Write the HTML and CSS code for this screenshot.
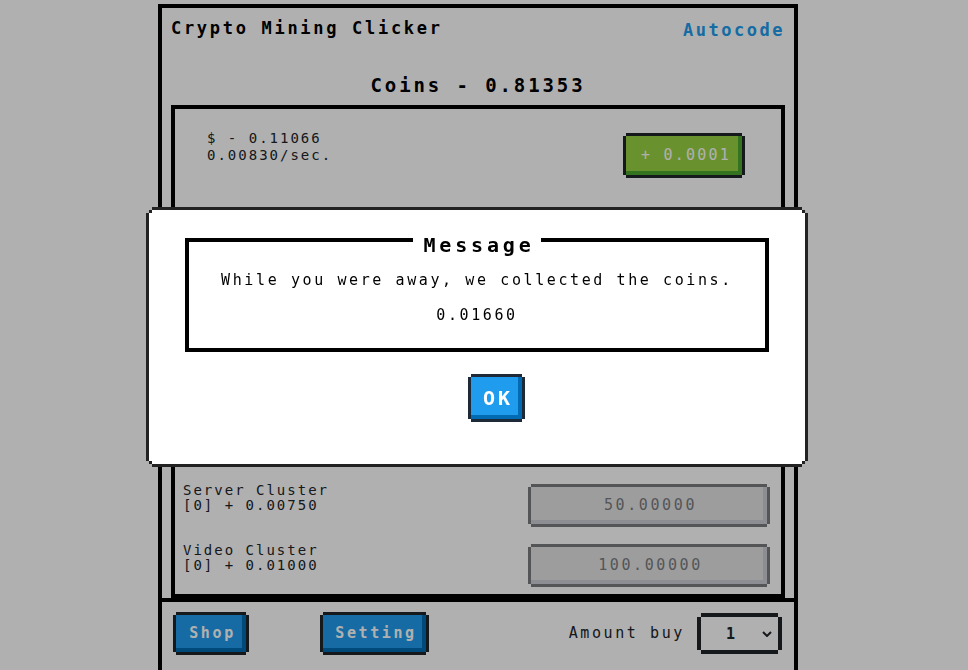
FILE: index.html
```html
<!DOCTYPE html>
<html lang="en">
<head>
<meta charset="utf-8">
<title>Crypto Mining Clicker</title>
<link rel="stylesheet" href="styles.css">
</head>
<body>
<div class="app">
  <header class="top">
    <h1 class="title">Crypto Mining Clicker</h1>
    <a class="link" href="#">Autocode</a>
  </header>
  <div class="coins">Coins - 0.81353</div>
  <section class="panel">
    <div class="stats">
      <div class="stats-text">
        <div>$ - 0.11066</div>
        <div>0.00830/sec.</div>
      </div>
      <button class="btn btn-success">+ 0.0001</button>
    </div>
    <ul class="shop-list">
      <li class="item"><div class="item-info"><div>Server Cluster</div><div>[0] + 0.00750</div></div><button class="btn btn-disabled">50.00000</button></li>
      <li class="item"><div class="item-info"><div>Video Cluster</div><div>[0] + 0.01000</div></div><button class="btn btn-disabled">100.00000</button></li>
    </ul>
  </section>
  <footer class="bar">
    <button class="btn btn-primary shop">Shop</button>
    <button class="btn btn-primary setting">Setting</button>
    <span class="amount">Amount buy</span>
    <div class="select"><span>1</span><svg class="chev" width="10" height="6" viewBox="0 0 10 6"><path d="M1 1 L5 5 L9 1" fill="none" stroke="#212529" stroke-width="2"/></svg></div>
  </footer>
</div>
<div class="overlay"></div>
<div class="dialog">
  <div class="msg-box">
    <div class="msg-title">Message</div>
    <p class="msg-text">While you were away, we collected the coins.</p>
    <p class="msg-amount">0.01660</p>
  </div>
  <div class="actions">
    <button class="btn btn-ok">OK</button>
  </div>
</div>
</body>
</html>
```

FILE: styles.css
```css
html, body {
  margin: 0;
  height: 100%;
  overflow: hidden;
}

body {
  box-sizing: border-box;
  padding: 4px 12px 0 0;
  background: #fff;
  color: #212529;
  font-family: "DejaVu Sans Mono", "Liberation Mono", monospace;
}

.app {
  box-sizing: border-box;
  width: 640px;
  margin: 0 auto;
  border: 4px solid #000;
  padding: 10px 9px 0;
}

.top {
  display: flex;
  justify-content: space-between;
  align-items: flex-start;
  height: 20px;
}

.title {
  margin: 0;
  font-size: 17px;
  font-weight: bold;
  letter-spacing: 2.7px;
  line-height: 20px;
  color: #000;
}

.link {
  margin-top: 2px;
  color: #209cee;
  text-decoration: none;
  font-size: 17px;
  font-weight: bold;
  letter-spacing: 2.5px;
  line-height: 20px;
}

.coins {
  margin-top: 35px;
  text-align: center;
  font-size: 19px;
  font-weight: bold;
  letter-spacing: 2.9px;
  line-height: 24px;
  color: #000;
}

.panel {
  margin-top: 8px;
  border: 4px solid #000;
  padding: 0 0 7px;
}

.stats {
  display: flex;
  justify-content: space-between;
  align-items: flex-start;
  padding: 21px 36px 0 32px;
}

.stats-text {
  font-size: 14px;
  letter-spacing: 2px;
  line-height: 17px;
}

.btn {
  display: block;
  box-sizing: border-box;
  margin: 3px;
  padding: 0;
  border: 0;
  font-family: inherit;
  font-size: 15px;
  letter-spacing: 2.6px;
  line-height: 19px;
  color: #fff;
  cursor: pointer;
}

.btn-success {
  width: 116px;
  height: 39px;
  margin-top: 6px;
  padding-left: 4px;
  letter-spacing: 2.2px;
  background: #98d444;
  box-shadow: 0 -3px 0 #212529, 0 3px 0 #212529, -3px 0 0 #212529, 3px 0 0 #212529, inset -4px -4px 0 #4aa52e;
}

.shop-list {
  list-style: none;
  margin: 306px 0 0;
  padding: 0 11px 0 8px;
}

.item {
  display: flex;
  justify-content: space-between;
  align-items: flex-start;
}

.item + .item {
  margin-top: 17px;
}

.item-info {
  margin-top: -1px;
  font-size: 14px;
  letter-spacing: 2px;
  line-height: 15px;
}

.btn-disabled {
  width: 236px;
  height: 37px;
  padding-left: 3px;
  background: #d3d3d3;
  color: #212529;
  opacity: 0.6;
  box-shadow: 0 -3px 0 #212529, 0 3px 0 #212529, -3px 0 0 #212529, 3px 0 0 #212529, inset -4px -4px 0 #adafbc;
}

.bar {
  display: flex;
  align-items: center;
  margin: 0 -9px;
  border-top: 4px solid #000;
  padding: 10px 12px 24px 11px;
}

.btn-primary {
  height: 37px;
  padding: 0 0 0 3px;
  font-weight: bold;
  background: #209cee;
  box-shadow: 0 -3px 0 #212529, 0 3px 0 #212529, -3px 0 0 #212529, 3px 0 0 #212529, inset -4px -4px 0 #006bb3;
}

.shop {
  width: 70px;
}

.setting {
  width: 103px;
  margin-left: 74px;
}

.amount {
  margin-left: auto;
  font-size: 15px;
  letter-spacing: 2.6px;
  line-height: 19px;
}

.select {
  box-sizing: border-box;
  display: flex;
  align-items: center;
  width: 77px;
  height: 33px;
  margin: 4px 4px 4px 16px;
  padding: 0 6px 0 25px;
  font-size: 15px;
  font-weight: bold;
  background: #fff;
  box-shadow: 0 -4px 0 #212529, 0 4px 0 #212529, -4px 0 0 #212529, 4px 0 0 #212529;
}

.chev {
  margin-left: auto;
}

.overlay {
  position: fixed;
  inset: 0;
  background: rgba(0, 0, 0, 0.31);
  z-index: 1;
}

.dialog {
  position: fixed;
  left: 149px;
  top: 210px;
  z-index: 2;
  box-sizing: border-box;
  width: 656px;
  padding: 28px 36px 42px;
  background: #fff;
  color: #000;
  box-shadow: 0 -6px 0 -3px #222, 0 6px 0 -3px #222, -6px 0 0 -3px #222, 6px 0 0 -3px #222;
}

.dialog::before,
.dialog::after {
  content: "";
  position: absolute;
  left: 0;
  right: 0;
  height: 3px;
  background: linear-gradient(to right, #222 0 3px, transparent 3px calc(100% - 3px), #222 calc(100% - 3px));
}

.dialog::before {
  top: 0;
}

.dialog::after {
  bottom: 0;
}

.msg-box {
  border: 4px solid #000;
  padding: 0 0 23px;
  text-align: center;
}

.msg-title {
  display: table;
  margin: -8px auto 0;
  padding: 0 6px 0 10px;
  background: #fff;
  font-size: 20px;
  font-weight: bold;
  letter-spacing: 3.85px;
  line-height: 22px;
}

.msg-text,
.msg-amount {
  margin: 14px 0 0;
  font-size: 15px;
  letter-spacing: 2.6px;
  line-height: 20px;
}

.msg-amount {
  margin-top: 15px;
}

.actions {
  display: flex;
  justify-content: center;
  margin-top: 22px;
  padding-left: 39px;
}

.btn-ok {
  width: 51px;
  height: 42px;
  padding-left: 3px;
  font-size: 20px;
  font-weight: bold;
  letter-spacing: 3px;
  background: #209cee;
  box-shadow: 0 -3px 0 #1f2a38, 0 3px 0 #1f2a38, -3px 0 0 #1f2a38, 3px 0 0 #1f2a38, inset -4px -4px 0 #006bb3;
}
```
